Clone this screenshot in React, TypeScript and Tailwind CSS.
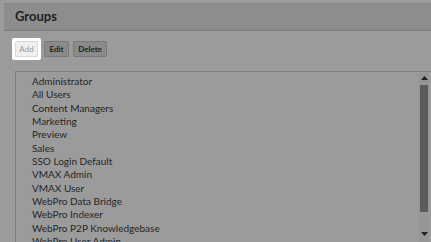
import React from "react";

const groups = [
  "Administrator",
  "All Users",
  "Content Managers",
  "Marketing",
  "Preview",
  "Sales",
  "SSO Login Default",
  "VMAX Admin",
  "VMAX User",
  "WebPro Data Bridge",
  "WebPro Indexer",
  "WebPro P2P Knowledgebase",
  "WebPro User Admin",
  "WebPro Users",
];

function App() {
  return (
    <div className="h-[242px] w-[431px] overflow-hidden bg-[#9b9b9b] pt-[3px] font-['Lato',sans-serif] text-[#262626]">
      <div className="ml-[4px] flex h-[28px] items-center border-y border-t-[#888] border-b-[#7c7c7c] bg-[#8d8d8d] pl-[11px]">
        <h1 className="text-[13px] font-bold text-[#1e1e1e]">Groups</h1>
      </div>

      <div className="ml-[12px] mt-[7px] flex items-center gap-[3px]">
        <div className="flex rounded-[2px] bg-white p-[3px]">
          <button className="h-[16px] w-[23px] rounded-[1px] border border-[#d8d8d8] bg-[#efefef] text-[8px] leading-none text-[#9a9a9a]">
            Add
          </button>
        </div>
        <button className="h-[16px] w-[25px] rounded-[1px] border border-[#7a7a7a] bg-[#8a8a8a] text-[8px] font-bold leading-none text-[#222]">
          Edit
        </button>
        <button className="ml-[1px] h-[16px] w-[34px] rounded-[1px] border border-[#7a7a7a] bg-[#8a8a8a] text-[8px] font-bold leading-none text-[#222]">
          Delete
        </button>
      </div>

      <div className="ml-[15px] mt-[11px] flex h-[200px] border-l border-t border-[#7e7e7e]">
        <ul className="flex-1 pl-[16px] pt-[3px] text-[10px] leading-[13.33px]">
          {groups.map((g) => (
            <li key={g} className="whitespace-nowrap">
              {g}
            </li>
          ))}
        </ul>
        <div className="mr-[2px] mt-[1px] flex w-[10px] flex-col items-center bg-[#959595]">
          <svg width="7" height="4" viewBox="0 0 7 4" className="mt-[3px]">
            <path d="M3.5 0 L7 4 L0 4 Z" fill="#222" />
          </svg>
          <div className="mt-[5px] h-[127px] w-[8px] bg-[#5c5c5c]" />
          <div className="flex-1" />
          <svg width="7" height="4" viewBox="0 0 7 4" className="mb-[35px]">
            <path d="M0 0 L7 0 L3.5 4 Z" fill="#222" />
          </svg>
        </div>
      </div>
    </div>
  );
}

export default App;
